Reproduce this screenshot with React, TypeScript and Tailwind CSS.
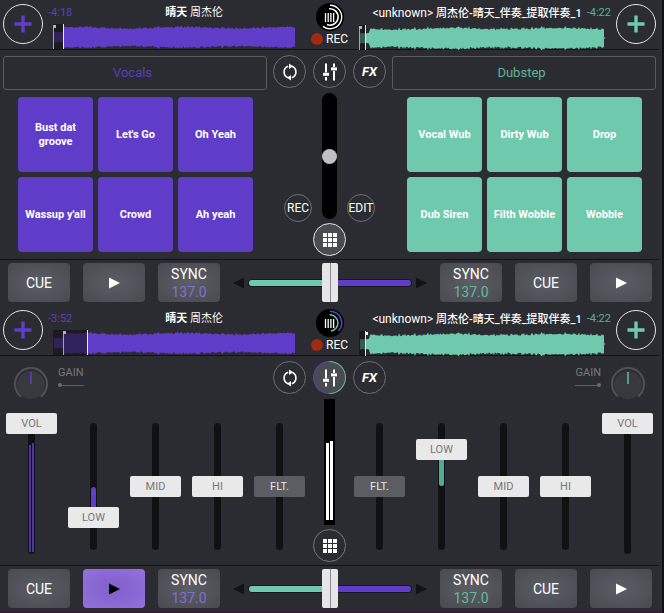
import { useState } from 'react'
import type { ReactNode } from 'react'
import clsx from 'clsx'

type Side = 'left' | 'right'

const PURPLE = '#603dc8'
const GREEN = '#6fcaad'

const ROUND_BUTTON = 'flex size-[33px] items-center justify-center rounded-full border'

function noise(index: number) {
    const value = Math.sin(index * 12.9898) * 43758.5453
    return value - Math.floor(value)
}

// Mirrored wave outline: a quiet intro up to `introEnd`, then the full track
function wavePath(start: number, introEnd: number, end: number, seed: number, spike: number) {
    const top: string[] = []
    const bottom: string[] = []

    for (let x = start; x <= end; x++) {
        const swell = Math.sin((x + seed) / 17) * 0.7
        const peak = noise(x * 3 + seed) > 0.85 ? spike : 0
        const body = 8.4 + swell + noise(x + seed) * 1.6 + peak
        const height = x < introEnd ? 4.5 + noise(x) * 0.8 : body
        top.push(`${x},${(13 - height).toFixed(1)}`)
        bottom.unshift(`${x},${(14 + height - noise(x + 7)).toFixed(1)}`)
    }

    return `M${top.join('L')}L${bottom.join('L')}Z`
}

type WaveProps = {
    side: Side
    cue: number
    position: number
}

function Waveform({ side, cue, position }: WaveProps) {
    const isLeft = side === 'left'
    const path = isLeft ? wavePath(1, 11, 242, 3, 0.8) : wavePath(1, 11, 245, 40, 1.8)
    const color = isLeft ? PURPLE : GREEN

    return (
        <svg
            viewBox={isLeft ? '0 0 243 25' : '0 0 247 25'}
            preserveAspectRatio="none"
            className="block h-[25px] w-full"
            aria-hidden="true"
        >
            <path d={path} fill={color} />
            {!isLeft && <path d="M244 12L247 13L244 14Z" fill={color} />}
            <rect x="0" y="0" width={position} height="25" fill="#111114" opacity="0.6" />
            <rect x={cue} y="1" width="1" height="24" fill="#a5a5a8" />
            <rect x={cue} y="1" width="3" height="3" fill={cue === position ? '#ffffff' : '#b4b4b6'} />
            <rect x={position} y="0" width="1" height="25" fill="#e8e8ea" />
        </svg>
    )
}

function AddTrackButton({ side }: { side: Side }) {
    return (
        <button
            type="button"
            aria-label={side === 'left' ? 'Load left deck' : 'Load right deck'}
            className="mt-1 flex size-10 shrink-0 items-center justify-center rounded-full border border-[#e4e4e6]"
        >
            <svg viewBox="0 0 18 18" className="size-[18px]" aria-hidden="true">
                <path d="M9 0.5V17.5M0.5 9H17.5" stroke={side === 'left' ? PURPLE : GREEN} strokeWidth="3.4" />
            </svg>
        </button>
    )
}

function Logo({ playing }: { playing: boolean }) {
    return (
        <svg viewBox="0 0 28 28" fill="none" className="size-7" aria-label="DJ">
            <circle cx="14" cy="14" r="14" fill="#000" />
            <path d="M9.5 10V19M12.2 10V19M14.9 10V19M17.6 10V19" stroke="#fff" strokeWidth="1.3" />
            {playing ? (
                <>
                    <path d="M14 2.3A11.7 11.7 0 0 1 22.5 22" stroke="#5f43cf" strokeWidth="1.5" />
                    <path d="M13.5 5.8A8.2 8.2 0 0 1 15 22.1" stroke="#5fc2a1" strokeWidth="1.5" />
                </>
            ) : (
                <>
                    <path d="M14 2.3A11.7 11.7 0 1 1 7 23.4" stroke="#fff" strokeWidth="1.4" />
                    <path d="M13 5.8A8.2 8.2 0 1 1 11 21.6" stroke="#fff" strokeWidth="1.6" />
                </>
            )}
        </svg>
    )
}

type HeaderProps = {
    elapsed: string
    playing: boolean
    leftWave: { cue: number; position: number }
    rightWave: { cue: number; position: number }
}

function DeckHeader({ elapsed, playing, leftWave, rightWave }: HeaderProps) {
    return (
        <header className="grid h-[50px] grid-cols-[1fr_59px_1fr] border-b border-[#131316] text-[11px] leading-4">
            <div className="flex min-w-0 gap-[5px] pl-[3px] pr-1">
                <AddTrackButton side="left" />
                <div className="min-w-0 flex-1 pt-[5px]">
                    <div className="flex">
                        <span className="text-[#5c40b8]">{elapsed}</span>
                        <span className="flex-1 truncate pl-5 text-center">
                            <b className="font-bold">晴天</b> 周杰伦
                        </span>
                    </div>
                    <div className="mt-[3px] pl-[5px]">
                        <Waveform side="left" {...leftWave} />
                    </div>
                </div>
            </div>

            <div className="flex flex-col items-center pt-[3px]">
                <Logo playing={playing} />
                <button type="button" className="flex items-center gap-[3px] text-xs leading-4">
                    <span className="size-3 rounded-full bg-[#a02a12]" />
                    REC
                </button>
            </div>

            <div className="flex min-w-0 gap-[5px] pr-[3px]">
                <div className="min-w-0 flex-1 pt-[5px]">
                    <div className="flex gap-[5px]">
                        <span className="flex-1 truncate text-right">
                            <span className="text-xs leading-4">&lt;unknown&gt;</span>{' '}
                            <b className="font-medium">周杰伦-晴天_伴奏_提取伴奏_1</b>
                        </span>
                        <span className="text-[#5fae96]">-4:22</span>
                    </div>
                    <div className="mt-[3px] pr-[5px]">
                        <Waveform side="right" {...rightWave} />
                    </div>
                </div>
                <AddTrackButton side="right" />
            </div>
        </header>
    )
}

function ViewButtons({ mixerActive }: { mixerActive: boolean }) {
    return (
        <div className="flex gap-[7px]">
            <button type="button" aria-label="Loop" className={clsx(ROUND_BUTTON, 'border-[#6d6e73]')}>
                <svg viewBox="0 0 18 20" fill="none" className="h-5 w-[18px]" aria-hidden="true">
                    <path d="M7.2 4.3A6 6 0 0 0 7.2 15.7M10.8 15.7A6 6 0 0 0 10.8 4.3" stroke="#fff" strokeWidth="1.6" />
                    <path d="M8 1.6L12 4.3L8 7ZM10 13L6 15.7L10 18.4Z" fill="#fff" />
                </svg>
            </button>
            {mixerActive ? (
                <button
                    type="button"
                    aria-label="Mixer"
                    className="flex size-[33px] items-center justify-center rounded-full bg-linear-to-r from-[#5b3fb8] from-45% to-[#67bfa2] to-55% p-px"
                >
                    <span className="flex size-full items-center justify-center rounded-full bg-[#4a4b51]">
                        <MixerIcon />
                    </span>
                </button>
            ) : (
                <button type="button" aria-label="Mixer" className={clsx(ROUND_BUTTON, 'border-[#6d6e73]')}>
                    <MixerIcon />
                </button>
            )}
            <button type="button" className={clsx(ROUND_BUTTON, 'border-[#6d6e73] text-[13px] font-bold italic')}>
                FX
            </button>
        </div>
    )
}

function MixerIcon() {
    return (
        <svg viewBox="0 0 16 18" fill="none" className="h-[18px] w-4" aria-hidden="true">
            <path d="M4 0.5V9.5M4 14V17.5M12 0.5V4M12 8V17.5" stroke="#fff" strokeWidth="2" />
            <rect x="1" y="9.8" width="6" height="3" fill="#fff" />
            <rect x="9" y="4.4" width="6" height="3" fill="#fff" />
        </svg>
    )
}

function PadsButton({ active }: { active: boolean }) {
    return (
        <button
            type="button"
            aria-label="Pads"
            className={clsx(ROUND_BUTTON, active ? 'border-[#e4e4e6] bg-[#4a4b51]' : 'border-[#77787d]')}
        >
            <span className="grid grid-cols-3 gap-px">
                {Array.from({ length: 9 }, (_, index) => (
                    <span key={index} className="size-1 bg-white" />
                ))}
            </span>
        </button>
    )
}

type BankProps = {
    side: Side
    name: string
    pads: string[]
}

function PadBank({ side, name, pads }: BankProps) {
    const isLeft = side === 'left'

    return (
        <div className={clsx('min-w-0 pt-1.5', isLeft ? 'pl-[3px]' : 'pr-[3px]')}>
            <button
                type="button"
                className={clsx(
                    'h-[34px] w-full rounded-[3px] border border-[#5a5b60] pr-[5px] text-[13px]',
                    isLeft ? 'text-[#5a3dbb]' : 'text-[#5fb498]'
                )}
            >
                {name}
            </button>
            <div className="mt-[7px] grid grid-cols-3 gap-[5px] pl-[15px] pr-[14px]">
                {pads.map((pad) => (
                    <button
                        key={pad}
                        type="button"
                        className={clsx(
                            'h-[75px] rounded-[4px] px-1 text-[11px] leading-[14px] font-bold',
                            isLeft ? 'bg-[#603dc8]' : 'bg-[#6fcaad]'
                        )}
                    >
                        {pad}
                    </button>
                ))}
            </div>
        </div>
    )
}

function PadsView() {
    const [volume, setVolume] = useState(50)

    return (
        <section className="grid h-[209px] grid-cols-[1fr_125px_1fr]">
            <PadBank
                side="left"
                name="Vocals"
                pads={['Bust dat groove', "Let's Go", 'Oh Yeah', "Wassup y'all", 'Crowd', 'Ah yeah']}
            />

            <div className="flex flex-col items-center pt-[5px]">
                <ViewButtons mixerActive={false} />
                <div className="mt-[5px] flex h-[129px] items-end gap-2.5">
                    <button
                        type="button"
                        className="flex size-7 items-center justify-center rounded-full border border-[#6d6e73] text-xs"
                    >
                        REC
                    </button>
                    <label className="relative h-[126px] w-[15px] self-start rounded-full bg-black">
                        <span
                            className="absolute left-0 size-[15px] rounded-full bg-[#c1c1c1]"
                            style={{ top: `calc((100% - 15px) * ${(100 - volume) / 100})` }}
                        />
                        <input
                            type="range"
                            aria-label="Sampler volume"
                            value={volume}
                            onChange={(event) => setVolume(Number(event.target.value))}
                            className="absolute inset-0 size-full opacity-0 [direction:rtl] [writing-mode:vertical-lr]"
                        />
                    </label>
                    <button
                        type="button"
                        className="flex size-7 items-center justify-center rounded-full border border-[#6d6e73] text-xs"
                    >
                        EDIT
                    </button>
                </div>
                <div className="mt-px">
                    <PadsButton active />
                </div>
            </div>

            <PadBank
                side="right"
                name="Dubstep"
                pads={['Vocal Wub', 'Dirty Wub', 'Drop', 'Dub Siren', 'Filth Wobble', 'Wobble']}
            />
        </section>
    )
}

type FaderProps = {
    label: string
    side: Side
    initial?: number
    muted?: boolean
    tall?: boolean
    children?: ReactNode
}

function Fader({ label, side, initial = 50, muted, tall, children }: FaderProps) {
    const [value, setValue] = useState(initial)
    const isEq = !tall && !muted

    return (
        <label className={clsx('relative flex w-[51px] justify-center', tall ? 'h-[141px]' : 'mt-2.5 h-[127px]')}>
            <span className="relative w-[7px] rounded-full bg-[#101113]">
                {children}
                {isEq && (
                    <span
                        className={clsx('absolute inset-x-px rounded-full', side === 'left' ? 'bg-[#603dc8]' : 'bg-[#4fae8f]')}
                        style={{
                            top: `${Math.min(50, 100 - value)}%`,
                            height: `${Math.abs(value - 50)}%`
                        }}
                    />
                )}
            </span>
            <span
                className={clsx(
                    'absolute left-0 h-[21px] w-full rounded-[2px] text-center text-[11px] leading-[21px]',
                    muted ? 'bg-[#5c5d62] text-[#e6e6e6]' : 'bg-[#e9e9e9] text-[#77777a]'
                )}
                style={{ top: `calc((100% - 21px) * ${(100 - value) / 100})` }}
            >
                {label}
            </span>
            <input
                type="range"
                value={value}
                onChange={(event) => setValue(Number(event.target.value))}
                className="absolute inset-0 size-full opacity-0 [direction:rtl] [writing-mode:vertical-lr]"
            />
        </label>
    )
}

function Gain({ side }: { side: Side }) {
    const [gain, setGain] = useState(50)
    const isLeft = side === 'left'

    return (
        <label className={clsx('relative flex gap-2.5 pt-1.5', !isLeft && 'flex-row-reverse')}>
            <svg viewBox="0 0 34 34" fill="none" className="size-[34px]" aria-hidden="true">
                <circle cx="17" cy="18" r="14" fill="#38393e" />
                <path d="M7 29.5A16 16 0 1 1 27 29.5" stroke="#505156" strokeWidth="2" />
                <path
                    d="M17 5V17"
                    stroke={isLeft ? PURPLE : '#5fb498'}
                    strokeWidth="1.6"
                    transform={`rotate(${(gain - 50) * 2.7} 17 17)`}
                />
            </svg>
            <span className="text-[11px] leading-3 text-[#77787c]">
                GAIN
                <span className={clsx('mt-1 flex items-center', !isLeft && 'flex-row-reverse')}>
                    <span className="size-1 rounded-full bg-[#6a6b70]" />
                    <span className="h-px flex-1 bg-[#5c5d62]" />
                </span>
            </span>
            <input
                type="range"
                value={gain}
                onChange={(event) => setGain(Number(event.target.value))}
                className="absolute inset-0 size-full opacity-0"
            />
        </label>
    )
}

function MixerView() {
    return (
        <section className="h-[209px]">
            <div className="flex h-[43px] justify-between px-[14px] pt-[5px]">
                <Gain side="left" />
                <ViewButtons mixerActive />
                <Gain side="right" />
            </div>

            <div className="flex justify-between px-1.5">
                <div className="flex gap-[11px] pt-[14px]">
                    <Fader label="VOL" side="left" initial={100} tall>
                        <span className="absolute inset-x-px bottom-0.5 flex h-[109px] items-end justify-between">
                            <span className="h-[107px] w-0.5 bg-[#4d35a0]" />
                            <span className="h-[109px] w-0.5 bg-[#4d35a0]" />
                        </span>
                    </Fader>
                    <Fader label="LOW" side="left" initial={21} />
                    <Fader label="MID" side="left" />
                    <Fader label="HI" side="left" />
                    <Fader label="FLT." side="left" muted />
                </div>

                <div className="flex flex-col items-center">
                    <div className="flex h-[126px] w-[11px] items-end justify-center gap-px bg-black pb-[5px]">
                        <span className="h-[77px] w-[3px] bg-white" />
                        <span className="h-[79px] w-[3px] bg-white" />
                    </div>
                    <div className="mt-1">
                        <PadsButton active={false} />
                    </div>
                </div>

                <div className="flex gap-[11px] pt-[14px]">
                    <Fader label="FLT." side="right" muted />
                    <Fader label="LOW" side="right" initial={85} />
                    <Fader label="MID" side="right" />
                    <Fader label="HI" side="right" />
                    <Fader label="VOL" side="right" initial={100} tall />
                </div>
            </div>
        </section>
    )
}

type TransportButtonProps = {
    label: string
    active?: boolean
    children: ReactNode
}

function TransportButton({ label, active, children }: TransportButtonProps) {
    return (
        <button
            type="button"
            aria-label={label}
            className={clsx(
                'h-[39px] w-[62px] rounded-[4px] text-sm',
                active
                    ? 'bg-radial from-[#8060cb] to-[#9470dc] text-black'
                    : 'bg-radial from-[#5b5e65] to-[#494a50] text-white'
            )}
        >
            {children}
        </button>
    )
}

function PlayIcon() {
    return (
        <svg viewBox="0 0 11 12" className="mx-auto h-3 w-[11px]" fill="currentColor" aria-hidden="true">
            <path d="M0 0.5L11 6L0 11.5Z" />
        </svg>
    )
}

function SyncLabel({ side }: { side: Side }) {
    return (
        <span className="block leading-[18px]">
            SYNC
            <span className={clsx('block', side === 'left' ? 'text-[#846dd2]' : 'text-[#67b79e]')}>137.0</span>
        </span>
    )
}

function Crossfader() {
    const [value, setValue] = useState(50)

    return (
        <div className="flex flex-1 items-center gap-1">
            <svg viewBox="0 0 11 12" className="h-3 w-[11px]" aria-hidden="true">
                <path d="M11 0.5L0 6L11 11.5Z" fill="#111214" />
            </svg>
            <label className="relative flex h-[39px] flex-1 items-center">
                <span className="flex h-2 w-full overflow-hidden rounded-full border border-[#17181a]">
                    <span className="flex-1 bg-[#6fcaad]" />
                    <span className="flex-1 bg-[#603dc8]" />
                </span>
                <span
                    className="absolute top-0 flex h-full w-4 justify-center rounded-[2px] bg-[#e6e6e6]"
                    style={{ left: `calc((100% - 16px) * ${value / 100})` }}
                >
                    <span className="h-full w-px bg-[#8a8a8c]" />
                </span>
                <input
                    type="range"
                    aria-label="Crossfader"
                    value={value}
                    onChange={(event) => setValue(Number(event.target.value))}
                    className="absolute inset-0 size-full opacity-0"
                />
            </label>
            <svg viewBox="0 0 11 12" className="h-3 w-[11px]" aria-hidden="true">
                <path d="M0 0.5L11 6L0 11.5Z" fill="#111214" />
            </svg>
        </div>
    )
}

function Transport({ playing }: { playing: boolean }) {
    return (
        <footer className="flex h-[47px] items-start gap-[13px] border-t border-[#131316] pl-2 pr-[7px] pt-[3px]">
            <TransportButton label="Cue left">CUE</TransportButton>
            <TransportButton label="Play left" active={playing}>
                <PlayIcon />
            </TransportButton>
            <TransportButton label="Sync left">
                <SyncLabel side="left" />
            </TransportButton>
            <Crossfader />
            <TransportButton label="Sync right">
                <SyncLabel side="right" />
            </TransportButton>
            <TransportButton label="Cue right">CUE</TransportButton>
            <TransportButton label="Play right">
                <PlayIcon />
            </TransportButton>
        </footer>
    )
}

function App() {
    return (
        <main className="border-r-2 border-b border-r-[#101012] border-b-[#3c1430] bg-[#2b2c31] pr-[3px] font-['Roboto','Noto_Sans_CJK_SC',sans-serif] text-white">
            <DeckHeader
                elapsed="-4:18"
                playing={false}
                leftWave={{ cue: 0, position: 10 }}
                rightWave={{ cue: 0, position: 6 }}
            />
            <PadsView />
            <Transport playing={false} />

            <DeckHeader
                elapsed="-3:52"
                playing
                leftWave={{ cue: 10, position: 34 }}
                rightWave={{ cue: 6, position: 6 }}
            />
            <MixerView />
            <Transport playing />
        </main>
    )
}

export default App
